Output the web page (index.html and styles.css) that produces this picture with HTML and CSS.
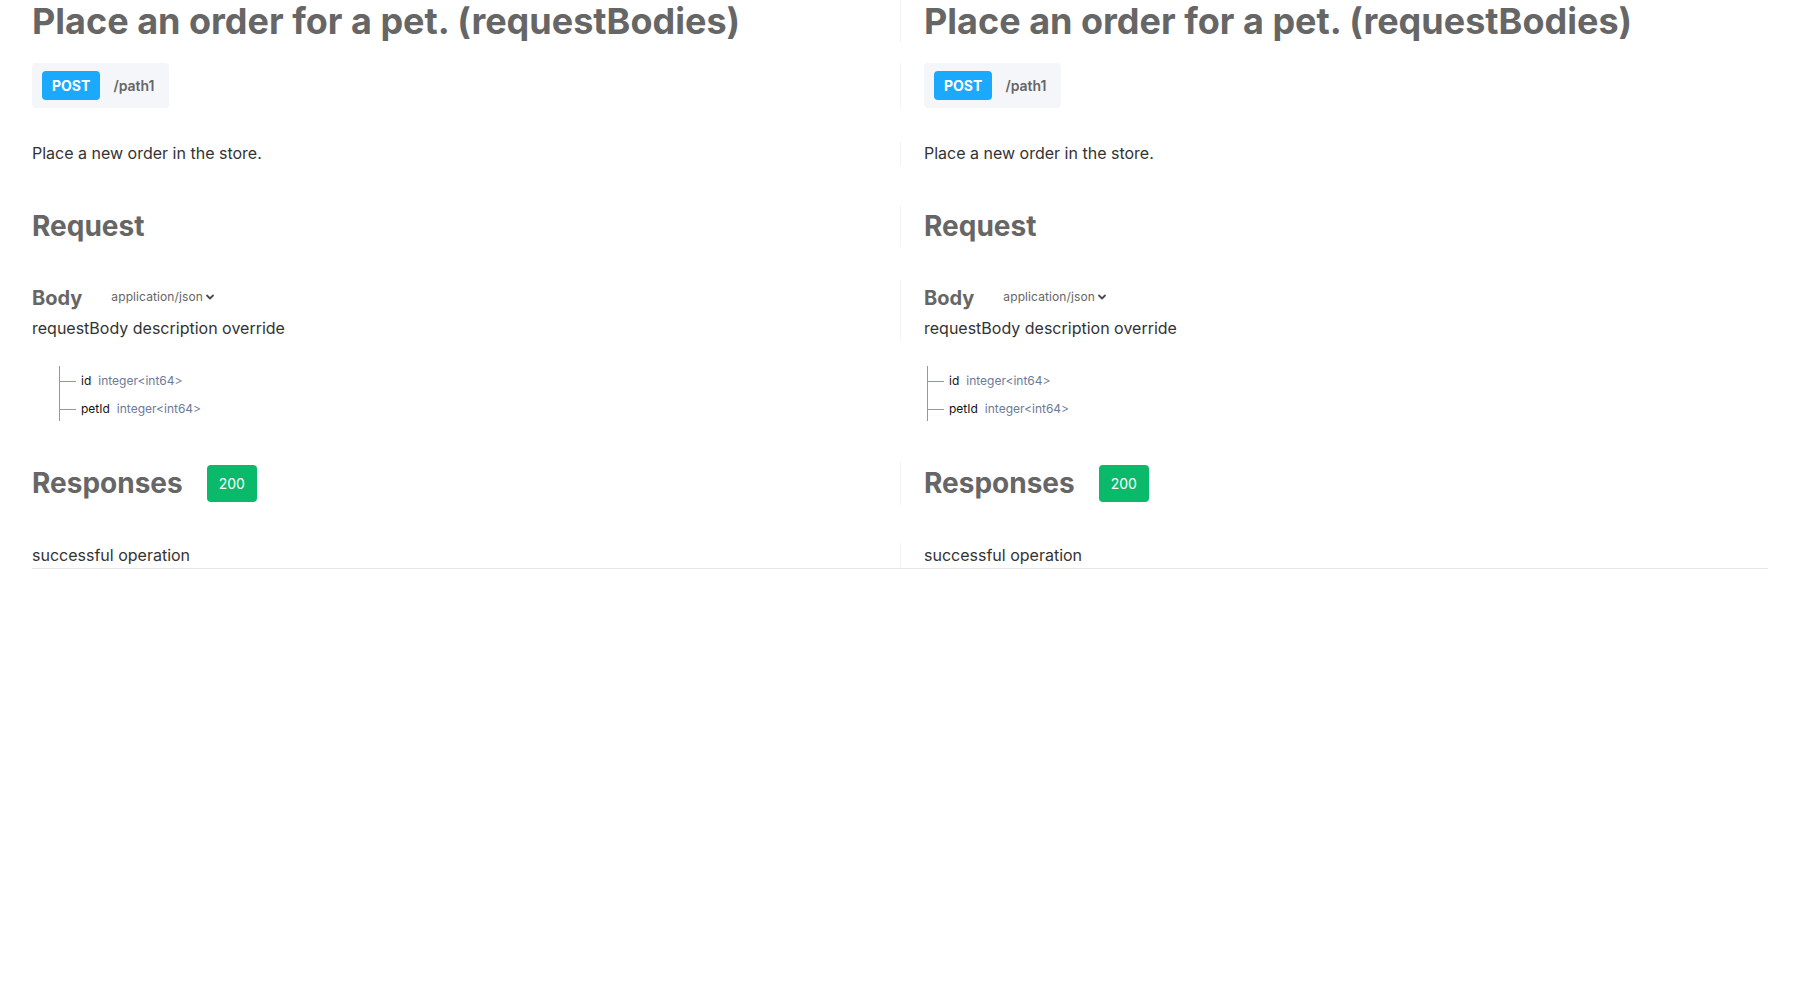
FILE: index.html
```html
<!DOCTYPE html>
<html lang="en">
<head>
<meta charset="utf-8">
<title>Place an order for a pet.</title>
<link rel="stylesheet" href="styles.css">
</head>
<body>
<main class="compare">
  <div class="row row-title">
    <div class="cell"><h1 class="title">Place an order for a pet. (requestBodies)</h1></div>
    <div class="cell cell-r"><h1 class="title">Place an order for a pet. (requestBodies)</h1></div>
  </div>
  <div class="row row-method">
    <div class="cell"><div class="endpoint"><span class="method">POST</span><span class="path">/path1</span></div></div>
    <div class="cell cell-r"><div class="endpoint"><span class="method">POST</span><span class="path">/path1</span></div></div>
  </div>
  <div class="row row-desc">
    <div class="cell"><p class="text">Place a new order in the store.</p></div>
    <div class="cell cell-r"><p class="text">Place a new order in the store.</p></div>
  </div>
  <div class="row row-request">
    <div class="cell"><h2 class="section">Request</h2></div>
    <div class="cell cell-r"><h2 class="section">Request</h2></div>
  </div>
  <div class="row row-body">
    <div class="cell">
      <div class="body-head"><h3 class="body-title">Body</h3><span class="mime">application/json<svg class="chev" viewBox="0 0 10 10" width="10" height="10"><path d="M2 3.5 L5 6.5 L8 3.5" fill="none" stroke="#4b4b4b" stroke-width="1.8" stroke-linecap="round" stroke-linejoin="round"/></svg></span></div>
      <p class="text body-desc">requestBody description override</p>
    </div>
    <div class="cell cell-r">
      <div class="body-head"><h3 class="body-title">Body</h3><span class="mime">application/json<svg class="chev" viewBox="0 0 10 10" width="10" height="10"><path d="M2 3.5 L5 6.5 L8 3.5" fill="none" stroke="#4b4b4b" stroke-width="1.8" stroke-linecap="round" stroke-linejoin="round"/></svg></span></div>
      <p class="text body-desc">requestBody description override</p>
    </div>
  </div>
  <div class="row row-tree">
    <div class="cell">
      <ul class="tree">
        <li class="prop"><span class="name">id</span><span class="type">integer&lt;int64&gt;</span></li>
        <li class="prop"><span class="name">petId</span><span class="type">integer&lt;int64&gt;</span></li>
      </ul>
    </div>
    <div class="cell cell-plain">
      <ul class="tree">
        <li class="prop"><span class="name">id</span><span class="type">integer&lt;int64&gt;</span></li>
        <li class="prop"><span class="name">petId</span><span class="type">integer&lt;int64&gt;</span></li>
      </ul>
    </div>
  </div>
  <div class="row row-responses">
    <div class="cell"><div class="resp-head"><h2 class="section">Responses</h2><span class="code">200</span></div></div>
    <div class="cell cell-r"><div class="resp-head"><h2 class="section">Responses</h2><span class="code">200</span></div></div>
  </div>
  <div class="row row-last">
    <div class="cell"><p class="text">successful operation</p></div>
    <div class="cell cell-r"><p class="text">successful operation</p></div>
  </div>
</main>
</body>
</html>
```

FILE: styles.css
```css
* { box-sizing: border-box; }
html, body { margin: 0; padding: 0; background: #ffffff; }
body {
  font-family: Inter, "Noto Sans", "Liberation Sans", sans-serif;
  color: #333333;
}
.compare {
  padding: 0 32px;
  display: flex;
  flex-direction: column;
}
.row {
  display: grid;
  grid-template-columns: 1fr 1fr;
}
.cell { min-width: 0; }
.cell-r {
  border-left: 1px solid #f2f3f5;
  padding-left: 23px;
}
.cell-plain { }

.title {
  margin: 0;
  font-size: 36px;
  line-height: 43px;
  font-weight: 700;
  color: #666666;
}

.row-method { margin-top: 20px; }
.endpoint {
  display: inline-flex;
  align-items: center;
  gap: 13px;
  background: #f5f6f9;
  border-radius: 4px;
  padding: 8px 14px 8px 10px;
}
.method {
  background: #1aa9fd;
  color: #ffffff;
  font-size: 14px;
  line-height: 17px;
  font-weight: 700;
  padding: 6px 10px;
  border-radius: 4px;
}
.path {
  font-size: 14px;
  font-weight: 600;
  color: #666666;
}

.text {
  margin: 0;
  font-size: 16px;
  line-height: 24px;
  color: #333333;
}
.row-desc { margin-top: 33px; }

.row-request { margin-top: 41px; }
.section {
  margin: 0;
  font-size: 28px;
  line-height: 41px;
  font-weight: 700;
  color: #666666;
}

.row-body { margin-top: 33px; }
.body-head {
  display: flex;
  align-items: center;
  height: 33px;
}
.body-title {
  margin: 0;
  font-size: 20px;
  line-height: 24px;
  font-weight: 700;
  color: #666666;
  position: relative;
  top: 1px;
}
.mime {
  display: inline-flex;
  align-items: center;
  gap: 2px;
  margin-left: 29px;
  font-size: 12px;
  letter-spacing: 0.1px;
  color: #666666;
}
.chev { display: block; }
.body-desc { margin-top: 3px; }

.row-tree { margin-top: 26px; }
.tree {
  list-style: none;
  margin: 0 0 0 27px;
  padding: 0;
  border-left: 1px solid #8d99ae;
}
.prop {
  display: flex;
  align-items: center;
  height: 27.5px;
  font-size: 12px;
  padding-left: 21px;
  position: relative;
  padding-top: 2px;
}
.prop::before {
  content: "";
  position: absolute;
  left: 0;
  top: 15px;
  width: 16px;
  border-top: 1px solid #8d99ae;
}
.name { color: #111111; margin-right: 7px; }
.type { color: #6b7a99; }

.row-responses { margin-top: 41px; }
.resp-head {
  display: flex;
  align-items: center;
  height: 43px;
  gap: 24px;
}
.code {
  background: #0bb96b;
  color: #ffffff;
  font-size: 14px;
  line-height: 17px;
  padding: 10px 12px;
  border-radius: 4px;
}

.row-last {
  margin-top: 38px;
  border-bottom: 1px solid #e5e5e5;
}
.row-last .cell { padding-bottom: 1px; }
```
